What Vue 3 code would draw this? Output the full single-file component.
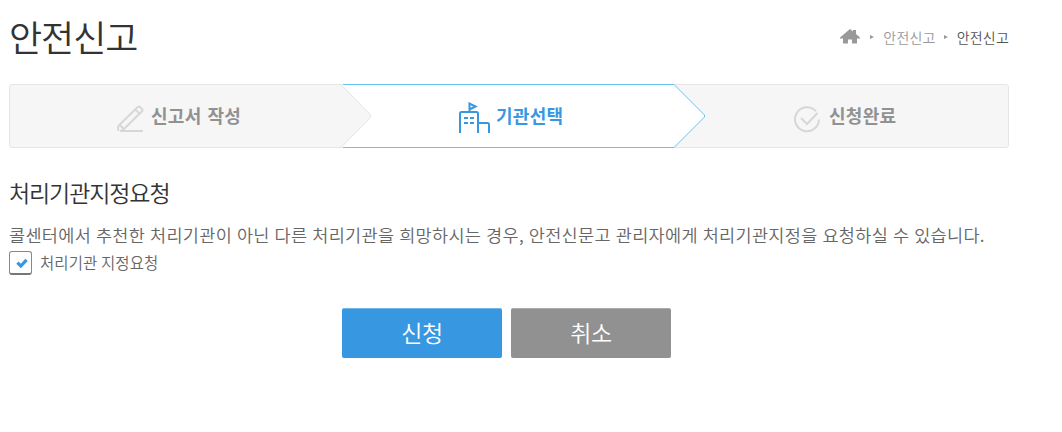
<template>
  <main class="report">
    <header class="page-head">
      <h1>안전신고</h1>
      <nav class="breadcrumb">
        <svg class="home" width="20" height="15" viewBox="0 0 20 15">
          <path d="M10 0 13 2.4V1H16V5L20 8.6V9.5H17V14.5H12V10.5H8V14.5H3V9.5H0V8.6z" />
        </svg>
        <span class="arrow"></span>
        <a>안전신고</a>
        <span class="arrow second"></span>
        <a class="current">안전신고</a>
      </nav>
    </header>

    <ol class="steps">
      <svg class="steps-bg" width="1000" height="64" viewBox="0 0 1000 64">
        <rect class="bar" x=".5" y=".5" width="999" height="63" rx="2.5" />
        <path class="active-fill" d="M333 .5H665L695 30.5Q696.5 32 695 33.5L665 63.5H333z" />
        <path class="active-line" d="M334 .5H665L695 30.5Q696.5 32 695 33.5L665 63.5H334" />
        <path class="done-fill" d="M320 1H333L361 30Q363 32 361 34L333 63H320z" />
        <path class="done-line" d="M320 .5H332L361 30.5Q362.8 32.3 361 34L332 63.5H320" />
      </svg>
      <li v-for="step in steps" :key="step.name" :class="['step', step.name]">
        <svg v-if="step.name === 'write'" class="icon" width="28" height="28" viewBox="0 0 28 28">
          <path d="M2.2 26V22Q2.2 21 3 20.2L21.8 2Q22.9 1 24 2L26 4Q27.1 5.1 26 6.2L8 24Q6 26 4 26H27M19.3 4.6 23.5 8.6M3.8 20 8.2 24.2" />
        </svg>
        <svg v-else-if="step.name === 'agency'" class="icon" width="32" height="32" viewBox="0 0 32 32">
          <path d="M1 31V11.5Q1 10 2.5 10H17.5Q19 10 19 11.5V31M19 21H28.5Q30 21 30 22.5V31M10.5 10V1.5L16.5 4.5 10.5 7.5" />
          <path d="M5 16H9M11 16H15M5 21H9M11 21H15" />
        </svg>
        <svg v-else class="icon" width="28" height="28" viewBox="0 0 28 28">
          <path d="M23 5.3A12 12 0 1 0 26 13.5M8 12 14 18 24.5 7" />
        </svg>
        <span>{{ step.label }}</span>
      </li>
    </ol>

    <section class="request">
      <h2>처리기관지정요청</h2>
      <p>콜센터에서 추천한 처리기관이 아닌 다른 처리기관을 희망하시는 경우, 안전신문고 관리자에게 처리기관지정을 요청하실 수 있습니다.</p>
      <label class="check">
        <input v-model="requested" type="checkbox" />
        <span class="box">
          <svg v-if="requested" width="12" height="10" viewBox="0 0 12 10">
            <path d="M1.4 4.6 4.8 8 10.6 1.8" />
          </svg>
        </span>
        <span class="check-text">처리기관 지정요청</span>
      </label>
    </section>

    <div class="actions">
      <button type="button" class="submit">신청</button>
      <button type="button" class="cancel">취소</button>
    </div>
  </main>
</template>

<script setup>
import { ref } from "vue";

const requested = ref(true);

const steps = [
  { name: "write", label: "신고서 작성" },
  { name: "agency", label: "기관선택" },
  { name: "complete", label: "신청완료" },
];
</script>

<style>
body {
  background: #fff;
}
</style>

<style scoped>
.report {
  box-sizing: border-box;
  width: 1009px;
  height: 432px;
  padding-left: 9px;
  overflow: hidden;
  color: #666;
  font-family: "Noto Sans CJK KR", sans-serif;
}
.page-head {
  display: flex;
  justify-content: space-between;
  height: 84px;
}
h1 {
  margin: 10px 0 0;
  color: #333;
  font-size: 36px;
  font-weight: 350;
  line-height: 52px;
  letter-spacing: -1px;
}
.breadcrumb {
  display: flex;
  align-items: center;
  height: 20px;
  margin-top: 27px;
  color: #999;
  font-size: 14px;
  font-weight: 350;
  line-height: 20px;
  letter-spacing: 0.2px;
}
.home {
  margin-bottom: 1px;
  fill: #999;
}
.arrow {
  margin: 0 9px 0 10px;
  border: 2.5px solid transparent;
  border-right: 0;
  border-left: 4px solid #999;
}
.arrow.second {
  margin: 0 9px 0 8px;
}
.current {
  color: #555;
}
.steps {
  display: flex;
  position: relative;
  height: 64px;
  margin: 0;
  padding: 0;
  list-style: none;
}
.steps-bg {
  position: absolute;
  inset: 0;
}
.bar {
  fill: #f6f6f6;
  stroke: #e5e5e5;
}
.active-fill {
  fill: #fff;
}
.active-line {
  fill: none;
  stroke: #68c4f5;
}
.done-fill {
  fill: #f6f6f6;
}
.done-line {
  fill: none;
  stroke: #e5e5e5;
}
.step {
  display: flex;
  position: relative;
  align-items: center;
  box-sizing: border-box;
  color: #919191;
  font-size: 18px;
  font-weight: 700;
  line-height: 26px;
  letter-spacing: 0.3px;
}
.step span {
  margin-bottom: 2px;
}
.icon {
  margin-top: 6px;
  fill: none;
  stroke: #d7d7d7;
  stroke-width: 2;
}
.write {
  width: 333px;
  padding-left: 107px;
  word-spacing: 1.5px;
}
.write span {
  margin-left: 7px;
}
.agency {
  width: 334px;
  padding-left: 117px;
  color: #3897e1;
}
.agency span {
  margin-left: 5px;
}
.agency .icon {
  margin-top: 4px;
  stroke: #3897e1;
}
.complete {
  width: 333px;
  padding-left: 117px;
}
.complete .icon {
  margin-top: 8px;
}
.complete span {
  margin-left: 8px;
}
h2 {
  margin: 0;
  padding-top: 26px;
  color: #333;
  font-size: 23px;
  font-weight: 350;
  line-height: 36px;
  letter-spacing: -1.1px;
}
p {
  margin: 12px 0 0;
  font-size: 17.5px;
  font-weight: 350;
  line-height: 26px;
  letter-spacing: 0.32px;
  word-spacing: 0.6px;
  white-space: nowrap;
}
.check {
  display: flex;
  align-items: center;
  height: 24px;
  margin-top: 3px;
  font-size: 15.5px;
  font-weight: 350;
}
.check input {
  position: absolute;
  opacity: 0;
}
.box {
  display: flex;
  align-items: center;
  justify-content: center;
  box-sizing: border-box;
  width: 23px;
  height: 24px;
  border: 1px solid #888;
  border-bottom: 2px solid #777;
  border-radius: 3px;
}
.box svg {
  margin-left: 2px;
  fill: none;
  stroke: #3897e1;
  stroke-width: 3.2;
}
.check-text {
  margin: 0 0 2px 8px;
  letter-spacing: 0.1px;
}
.actions {
  display: flex;
  gap: 9px;
  margin: 33px 0 0 333px;
}
button {
  width: 160px;
  height: 50px;
  padding: 0 0 3px;
  border: 0;
  border-top: 1px solid #70b4ea;
  border-radius: 2px;
  background: #3897e1;
  color: #fff;
  font: 350 23px/32px "Noto Sans CJK KR", sans-serif;
  letter-spacing: -0.5px;
}
.cancel {
  border-top-color: #aaa;
  background: #919191;
}
</style>
